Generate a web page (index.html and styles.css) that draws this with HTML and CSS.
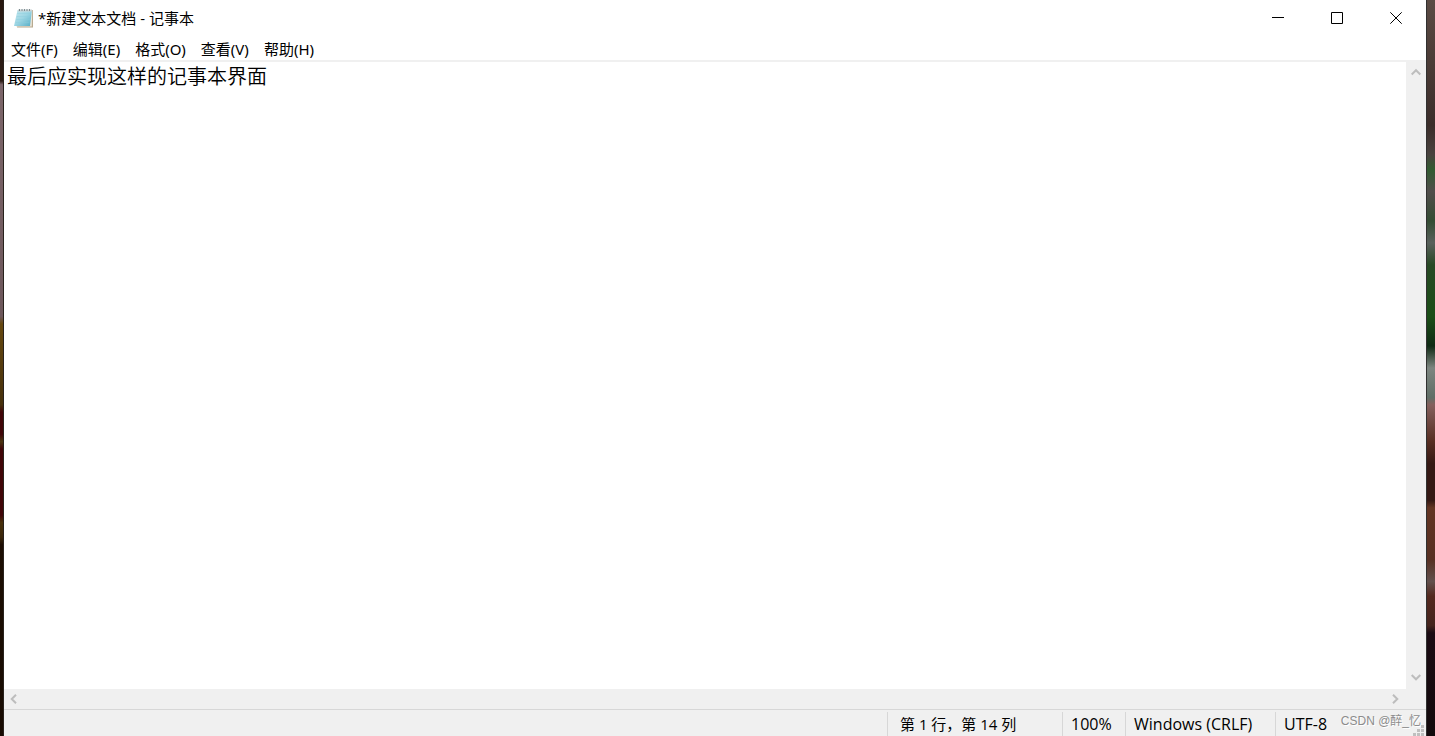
FILE: index.html
```html
<!DOCTYPE html>
<html lang="zh-CN">
<head>
<meta charset="utf-8">
<title>*新建文本文档 - 记事本</title>
<link rel="stylesheet" href="styles.css">
</head>
<body>
<main class="window">
  <header class="titlebar">
    <svg class="app-icon" width="20" height="21" viewBox="0 0 20 21" aria-hidden="true">
      <defs><linearGradient id="paper" x1="0" y1="0" x2="1" y2="1"><stop offset="0" stop-color="#c5e8ef"/><stop offset=".5" stop-color="#9cd5e3"/><stop offset="1" stop-color="#55adc6"/></linearGradient></defs>
      <path d="M5 2h14v17.500H3z" fill="#b8aa90"/>
      <path d="M4 2h14.300l-.5 16.500H2z" fill="#e9e4d8"/>
      <path d="M3.500 2h14.500l-2 16H0z" fill="url(#paper)"/>
      <path d="M3.200 5.500h13.500M2.800 8.500h13.500M2.300 11.500h13.500M1.700 14.500h13.500" stroke="#8accdb" stroke-width=".4"/>
      <path d="M4 2.500h14" stroke="#c9d3d5" stroke-width="2"/>
      <path d="M5.500 1v2M8 1v2M10.500 1v2M13 1v2M15.500 1v2" stroke="#7d8b90"/>
    </svg>
    <h1 class="title">*新建文本文档 - 记事本</h1>
    <div class="controls">
      <button class="control" type="button" aria-label="最小化"><svg width="13" height="12" viewBox="0 0 13 12"><path d="M0 5.500h12"/></svg></button>
      <button class="control" type="button" aria-label="最大化"><svg width="13" height="12" viewBox="0 0 13 12"><path d="M.5.5h11v11H.5z"/></svg></button>
      <button class="control" type="button" aria-label="关闭"><svg width="13" height="12" viewBox="0 0 13 12"><path d="M.3.300l11.400 11.400M11.700.300L.3 11.700"/></svg></button>
    </div>
  </header>
  <nav class="menubar">
    <button class="menu" type="button">文件(F)</button>
    <button class="menu" type="button">编辑(E)</button>
    <button class="menu" type="button">格式(O)</button>
    <button class="menu" type="button">查看(V)</button>
    <button class="menu" type="button">帮助(H)</button>
  </nav>
  <section class="workspace">
    <textarea class="editor" aria-label="文本编辑区" spellcheck="false">最后应实现这样的记事本界面</textarea>
    <div class="scroll vertical">
      <button class="arrow" type="button" aria-label="向上滚动"><svg width="10" height="8" viewBox="0 0 10 8"><path d="M.7 6.500L5 2.200 9.300 6.500"/></svg></button>
      <button class="arrow" type="button" aria-label="向下滚动"><svg width="10" height="8" viewBox="0 0 10 8"><path d="M.7 2L5 6.300 9.300 2"/></svg></button>
    </div>
    <div class="scroll horizontal">
      <button class="arrow" type="button" aria-label="向左滚动"><svg width="8" height="10" viewBox="0 0 8 10"><path d="M6 .7L1.700 5 6 9.300"/></svg></button>
      <button class="arrow" type="button" aria-label="向右滚动"><svg width="8" height="10" viewBox="0 0 8 10"><path d="M2 .7L6.300 5 2 9.300"/></svg></button>
    </div>
  </section>
  <footer class="statusbar">
    <span class="field position">第 1 行，第 14 列</span>
    <span class="field latin zoom">100%</span>
    <span class="field latin ending">Windows (CRLF)</span>
    <span class="field latin encoding">UTF-8</span>
    <span class="watermark">CSDN @醉_忆</span>
    <svg class="grip" width="11" height="11" viewBox="0 0 11 11" aria-hidden="true"><path d="M8 0h3v3H8zM4 4h3v3H4zM8 4h3v3H8zM0 8h3v3H0zM4 8h3v3H4zM8 8h3v3H8z" fill="#bfbfbf"/></svg>
  </footer>
</main>
</body>
</html>
```
FILE: styles.css
```css
* {
  box-sizing: border-box;
}

body {
  display: grid;
  grid-template-columns: 4px 1fr 9px;
  height: 100vh;
  margin: 0;
  color: #000;
  font: 15px/20px "Open Sans", "Noto Sans CJK SC", sans-serif;
}

body::before {
  content: "";
  border-right: 1px solid #28221d;
  background: linear-gradient(#28170f 0, #2d1d16 11%, #7c666a 11.500%, #6d575b 43%, #664810 44%, #46300c 55%, #400508 56%, #400508 59%, #4a3511 60%, #400508 61%, #400508 70%, #48300c 71%, #3b260a 73%, #1c0d02 74%, #180b02);
}

body::after {
  content: "";
  border-left: 1px solid #303030;
  background: linear-gradient(#5b4b44 0, #3b2d2a 17%, #49433f 21%, #325b31 23%, #514d4b 26%, #344c33 30%, #59605c 33%, #284925 36%, #1b4e17 43%, #102a15 47%, #7d8580 50%, #606e66 54%, #84605d 55%, #572e22 60%, #351914 63%, #351914 68%, #633523 69%, #573023 76%, #62504c 79%, #54291f 81%, #44241d 85%, #1b0b13 86%, #120a0c);
}

button {
  display: flex;
  align-items: center;
  justify-content: center;
  padding: 0;
  border: 0;
  background: transparent;
  color: inherit;
  font: inherit;
}

.window {
  display: flex;
  flex-direction: column;
  min-width: 0;
  background: #fff;
}

.titlebar {
  display: flex;
  align-items: center;
  height: 36px;
  padding-left: 10px;
}

.title {
  margin: 0 0 0 4px;
  font-size: 15px;
  font-weight: 400;
}

.controls {
  display: flex;
  align-self: stretch;
  margin-left: auto;
}

.control {
  width: 59px;
}

.control svg {
  fill: none;
  stroke: #000;
}

.menubar {
  display: flex;
  gap: 1px;
  height: 26px;
  border-bottom: 2px solid #f0f0f0;
  font-family: "Noto Sans", "Noto Sans CJK SC", sans-serif;
}

.menu {
  padding: 2px 7px 0;
}

.workspace {
  display: grid;
  flex: 1;
  grid-template-columns: 1fr 20px;
  grid-template-rows: 1fr 20px;
  min-height: 0;
  background: #f0f0f0;
}

.editor {
  width: 100%;
  height: 100%;
  padding: 0 3px;
  border: 0;
  outline: 0;
  overflow: hidden;
  resize: none;
  background: #fff;
  color: #000;
  font: 350 20px/28px "Noto Sans CJK SC", sans-serif;
}

.scroll {
  display: flex;
  justify-content: space-between;
}

.vertical {
  flex-direction: column;
  padding-bottom: 2px;
}

.horizontal {
  padding-right: 2px;
}

.arrow {
  width: 19px;
  height: 20px;
}

.arrow svg {
  fill: none;
  stroke: #bdbdbd;
  stroke-width: 2;
}

.statusbar {
  position: relative;
  display: flex;
  justify-content: flex-end;
  height: 27px;
  padding-top: 2px;
  border-top: 1px solid #d7d7d7;
  background: #f0f0f0;
}

.field {
  padding: 2px 8px 0;
  border-left: 1px solid #d7d7d7;
  white-space: nowrap;
}

.latin {
  font-size: 16px;
}

.position {
  width: 175px;
  padding-left: 12px;
}

.zoom {
  width: 63px;
}

.ending {
  width: 150px;
}

.encoding {
  width: 151px;
}

.watermark {
  position: absolute;
  right: 5px;
  bottom: 6px;
  color: #8c8c8c;
  font: 12px/18px "Liberation Sans", "Noto Sans CJK SC", sans-serif;
  text-shadow: 1px 1px #fff;
}

.grip {
  position: absolute;
  right: 2px;
  bottom: 0;
}
```
